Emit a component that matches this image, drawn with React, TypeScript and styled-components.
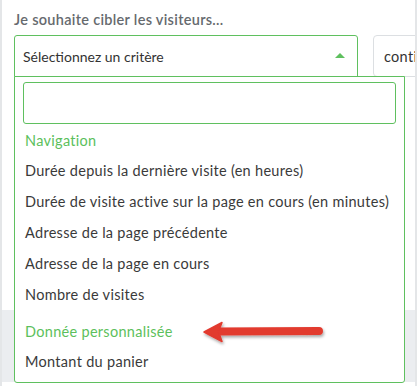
import React from "react";
import styled, { createGlobalStyle } from "styled-components";

const Global = createGlobalStyle`
  html, body { margin: 0; padding: 0; background: #ffffff; }
  body { font-family: "Lato", "Open Sans", sans-serif; }
`;

const GREEN = "#5fc05f";

const Frame = styled.div`
  position: relative;
  width: 417px;
  height: 386px;
  box-sizing: border-box;
  border-left: 2px solid #e4e6e8;
  border-right: 2px solid #e4e6e8;
  overflow: hidden;
  display: flex;
  flex-direction: column;
  background: #fff;
`;

const Top = styled.div`
  padding: 11px 0 0 12px;
`;

const Label = styled.div`
  font-size: 14.5px;
  letter-spacing: 0.3px;
  line-height: 18px;
  font-weight: 600;
  color: #666a6e;
  margin-bottom: 6px;
`;

const Row = styled.div`
  display: flex;
  gap: 15px;
`;

const Select = styled.div`
  flex: 0 0 auto;
  width: 344px;
  height: 42px;
  box-sizing: border-box;
  border: 1px solid ${GREEN};
  border-radius: 3px 3px 0 0;
  display: flex;
  align-items: center;
  justify-content: space-between;
  padding: 0 12px 0 8px;
  font-size: 14px;
  color: #333;
`;

const Caret = styled.span`
  width: 0;
  height: 0;
  border-left: 5px solid transparent;
  border-right: 5px solid transparent;
  border-bottom: 5px solid ${GREEN};
  margin-top: -2px;
`;

const OtherSelect = styled.div`
  flex: 0 0 140px;
  height: 42px;
  box-sizing: border-box;
  border: 1px solid #dcdfe2;
  border-radius: 4px;
  display: flex;
  align-items: center;
  padding: 0 10px;
  font-size: 14.5px;
  letter-spacing: 0.3px;
  color: #333;
`;

const Band = styled.div`
  margin-top: auto;
  margin-bottom: 4px;
  height: 72px;
  background: #ebedf0;
`;

const Panel = styled.div`
  position: absolute;
  left: 12px;
  top: 76px;
  width: 391px;
  height: 307px;
  box-sizing: border-box;
  border: 1px solid ${GREEN};
  border-radius: 0 0 3px 3px;
  background: #fff;
  padding: 5px 8px 0 8px;
`;

const Search = styled.div`
  height: 42px;
  box-sizing: border-box;
  border: 1px solid ${GREEN};
  border-radius: 3px;
  margin-bottom: 2px;
`;

const GroupHeader = styled.div<{ $gap?: number }>`
  padding-left: 2px;
  margin-top: ${(p) => p.$gap ?? 0}px;
  height: 29px;
  line-height: 29px;
  font-size: 14.5px;
  letter-spacing: 0.3px;
  color: #5cbf5c;
`;

const Option = styled.div`
  padding-left: 2px;
  height: 31px;
  line-height: 31px;
  font-size: 14.5px;
  letter-spacing: 0.3px;
  color: #3a3a3a;
  white-space: nowrap;
`;

const Arrow = styled.svg`
  position: absolute;
  left: 194px;
  top: 314px;
  overflow: visible;
`;

export default function App() {
  const nav = [
    "Durée depuis la dernière visite (en heures)",
    "Durée de visite active sur la page en cours (en minutes)",
    "Adresse de la page précédente",
    "Adresse de la page en cours",
    "Nombre de visites",
  ];
  return (
    <>
      <Global />
      <Frame>
        <Top>
          <Label>Je souhaite cibler les visiteurs...</Label>
          <Row>
            <Select>
              <span>Sélectionnez un critère</span>
              <Caret />
            </Select>
            <OtherSelect>contient</OtherSelect>
          </Row>
        </Top>
        <Band />
        <Panel>
          <Search />
          <GroupHeader>Navigation</GroupHeader>
          {nav.map((t) => (
            <Option key={t}>{t}</Option>
          ))}
          <GroupHeader $gap={7}>Donnée personnalisée</GroupHeader>
          <Option>Montant du panier</Option>
        </Panel>
        <Arrow width="130" height="34" viewBox="194 314 130 34">
          <defs>
            <filter id="sh" x="-20%" y="-50%" width="140%" height="200%">
              <feDropShadow dx="1" dy="2" stdDeviation="1.5" floodColor="#000" floodOpacity="0.35" />
            </filter>
          </defs>
          <g filter="url(#sh)">
            <line x1="214" y1="331.5" x2="317" y2="331" stroke="#e23a2f" strokeWidth="8" strokeLinecap="round" />
            <path d="M202 332 L220 322.5 L216.5 331.5 L220 341.5 Z" fill="#e23a2f" stroke="#e23a2f" strokeWidth="1.5" strokeLinejoin="round" />
          </g>
        </Arrow>
      </Frame>
    </>
  );
}
